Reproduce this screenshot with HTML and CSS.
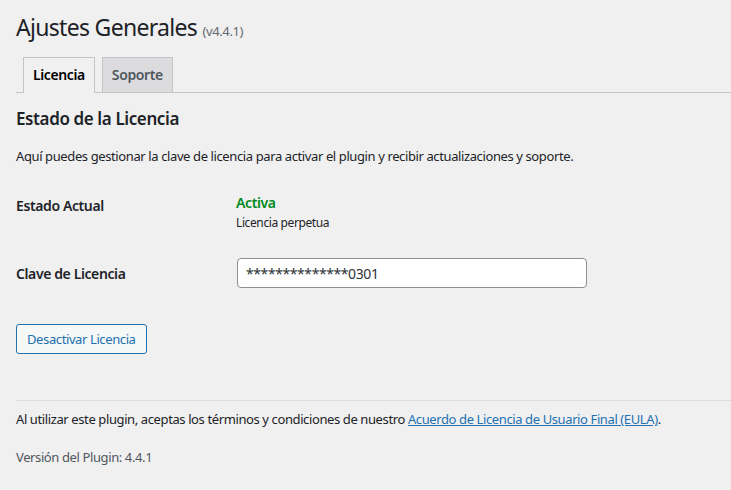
FILE: index.html
```html
<!DOCTYPE html>
<html lang="es">
<head>
<meta charset="utf-8">
<title>Ajustes Generales</title>
<link rel="stylesheet" href="styles.css">
</head>
<body>
<div class="wrap">
  <h1 class="page-title">Ajustes Generales <span class="version">(v4.4.1)</span></h1>
  <nav class="tabs">
    <a class="tab tab-active" href="#">Licencia</a>
    <a class="tab" href="#">Soporte</a>
  </nav>
  <h2 class="section-title">Estado de la Licencia</h2>
  <p class="intro">Aquí puedes gestionar la clave de licencia para activar el plugin y recibir actualizaciones y soporte.</p>
  <div class="form-rows">
    <div class="row row-status">
      <div class="label">Estado Actual</div>
      <div class="value">
        <div class="status-active">Activa</div>
        <div class="status-desc">Licencia perpetua</div>
      </div>
    </div>
    <div class="row row-key">
      <div class="label">Clave de Licencia</div>
      <div class="value"><input class="key-input" type="text" value="**************0301" readonly></div>
    </div>
  </div>
  <button class="btn" type="button">Desactivar Licencia</button>
  <hr class="divider">
  <p class="footer-text">Al utilizar este plugin, aceptas los términos y condiciones de nuestro <a href="#" class="link">Acuerdo de Licencia de Usuario Final (EULA)</a>.</p>
  <p class="footer-version">Versión del Plugin: 4.4.1</p>
</div>
</body>
</html>
```

FILE: styles.css
```css
html, body {
  margin: 0;
  padding: 0;
  background: #f0f0f1;
}
body {
  font-family: "Noto Sans", "Open Sans", sans-serif;
  color: #1d2327;
  font-size: 13px;
  letter-spacing: -0.03em;
  overflow: hidden;
}
.wrap {
  padding-left: 16px;
}
.page-title {
  margin: 0;
  padding-top: 12px;
  font-size: 23px;
  font-weight: 400;
  line-height: 30px;
  letter-spacing: -0.03em;
  color: #1d2327;
}
.version {
  font-size: 13px;
  letter-spacing: -0.03em;
  color: #646970;
}
.tabs {
  margin-top: 11px;
  display: flex;
  border-bottom: 1px solid #c3c4c7;
  height: 35px;
  align-items: flex-end;
}
.tab {
  display: block;
  margin-left: 7px;
  padding: 5px 9px;
  height: 24px;
  line-height: 24px;
  font-size: 14px;
  font-weight: 600;
  text-decoration: none;
  color: #50575e;
  background: #dcdcde;
  border: 1px solid #c3c4c7;
  border-bottom: none;
}
.tab-active {
  background: #f0f0f1;
  color: #000;
  height: 25px;
  margin-bottom: -1px;
}
.section-title {
  margin: 15px 0 0;
  font-size: 17px;
  font-weight: 600;
  line-height: 22px;
}
.intro {
  margin: 16px 0 0;
  line-height: 20px;
}
.form-rows {
  margin-top: 28px;
  display: flex;
  flex-direction: column;
}
.row {
  display: grid;
  grid-template-columns: 220px 1fr;
}
.label {
  font-size: 14px;
  font-weight: 600;
}
.row-status .label {
  padding-top: 2px;
}
.status-active {
  font-size: 14px;
  font-weight: 600;
  color: #008a20;
  line-height: 18px;
}
.status-desc {
  font-size: 12px;
  line-height: 18px;
  margin-top: 2px;
}
.row-key {
  margin-top: 26px;
  align-items: center;
}
.key-input {
  box-sizing: border-box;
  width: 350px;
  height: 30px;
  margin-left: 1px;
  padding: 0 8px;
  font-family: inherit;
  font-size: 14px;
  letter-spacing: -0.03em;
  color: #2c3338;
  background: #fff;
  border: 1px solid #8c8f94;
  border-radius: 4px;
}
.btn {
  display: block;
  margin-top: 36px;
  box-sizing: border-box;
  height: 30px;
  padding: 0 10px;
  font-family: inherit;
  font-size: 13px;
  letter-spacing: -0.03em;
  white-space: nowrap;
  color: #2271b1;
  background: #f6f7f7;
  border: 1px solid #2271b1;
  border-radius: 3px;
}
.divider {
  margin: 46px 0 0;
  border: 0;
  border-top: 1px solid #dcdcde;
  height: 0;
}
.footer-text {
  margin: 8px 0 0;
  line-height: 20px;
}
.link {
  color: #2271b1;
}
.footer-version {
  margin: 18px 0 0;
  line-height: 20px;
  color: #50575e;
}
```
